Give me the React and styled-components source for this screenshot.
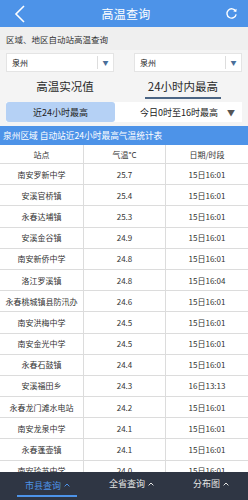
import React from 'react';
import styled, { createGlobalStyle } from 'styled-components';

const GlobalStyle = createGlobalStyle`
  html, body {
    margin: 0;
    padding: 0;
    background: #ffffff;
    font-family: "Noto Sans CJK SC", "Noto Sans", "Liberation Sans", sans-serif;
  }
  * { box-sizing: border-box; }
`;

const Page = styled.div`
  width: 248px;
  height: 500px;
  overflow: hidden;
  position: relative;
  background: #fff;
`;

const Header = styled.div`
  height: 27px;
  background: #4d93e8;
  display: flex;
  align-items: center;
  justify-content: space-between;
  padding: 0 8px 0 12px;
  color: #fff;
`;

const Title = styled.div`
  font-size: 12px;
  letter-spacing: 0.3px;
`;

const IconBox = styled.div`
  width: 16px;
  height: 16px;
  display: flex;
  align-items: center;
  justify-content: center;
`;

const SectionLabel = styled.div`
  height: 23px;
  background: #efefef;
  display: flex;
  align-items: center;
  padding-left: 6px;
  font-size: 8.5px;
  color: #333;
`;

const FilterArea = styled.div`
  background: #f4f4f4;
  padding: 3px 6px 4px;
`;

const SelectRow = styled.div`
  display: flex;
  justify-content: space-between;
`;

const Select = styled.div`
  width: 108px;
  height: 19px;
  background: #fff;
  border: 1px solid #e4e4e4;
  display: flex;
  align-items: center;
  font-size: 8px;
  color: #222;
`;

const SelectText = styled.div`
  flex: 1;
  padding-left: 5px;
`;

const SelectArrow = styled.div`
  width: 16px;
  height: 13px;
  border-left: 1px solid #ddd;
  display: flex;
  align-items: center;
  justify-content: center;
  color: #4a6f9a;
  font-size: 6px;
`;

const Tabs = styled.div`
  display: flex;
  height: 27px;
  margin-top: 1px;
`;

const Tab = styled.div`
  flex: 1;
  display: flex;
  justify-content: center;
  align-items: center;
`;

const TabLabel = styled.div`
  font-size: 11.5px;
  color: #2a2a2a;
  padding: 2px 3px 3px;
  border-bottom: 2px solid ${p => (p.$active ? '#4b6584' : 'transparent')};
  margin-top: 2px;
`;

const SubTabs = styled.div`
  display: flex;
  height: 20px;
  margin-top: 2px;
  background: #fff;
`;

const SubTab = styled.div`
  flex: 1;
  display: flex;
  align-items: center;
  justify-content: center;
  font-size: 9px;
  color: #222;
  background: ${p => (p.$active ? '#b5d1f5' : '#fff')};
  border-radius: 3px;
  gap: 9px;
  padding-left: ${p => (p.$active ? '0' : '18px')};
`;

const Caret = styled.span`
  font-size: 8px;
  color: #555;
`;

const TableTitle = styled.div`
  height: 19px;
  background: #4d93e8;
  color: #fff;
  font-size: 8.7px;
  display: flex;
  align-items: center;
  padding-left: 3px;
`;

const Table = styled.div`
  background: #fff;
`;

const Row = styled.div`
  display: grid;
  grid-template-columns: 83px 82px 83px;
  height: ${p => (p.$head ? '19px' : '21.2px')};
  border-bottom: 1px solid #dcdcdc;
`;

const Cell = styled.div`
  display: flex;
  align-items: center;
  justify-content: center;
  font-size: 8px;
  color: #333;
  border-left: ${p => (p.$first ? 'none' : '1px solid #dcdcdc')};
  white-space: nowrap;
`;

const BottomNav = styled.div`
  position: absolute;
  left: 0;
  right: 0;
  bottom: 0;
  height: 28px;
  background: #2f3644;
  display: flex;
  align-items: center;
  justify-content: space-between;
  padding: 0 12px 0 17px;
`;

const NavItem = styled.div`
  font-size: 9px;
  color: ${p => (p.$active ? '#4d93e8' : '#e6e6e6')};
  padding: 0 7px 3px 8px;
  border-bottom: 2px solid ${p => (p.$active ? '#4d93e8' : 'transparent')};
  margin-top: ${p => (p.$active ? '3px' : '0')};
  display: flex;
  align-items: center;
  gap: 3px;
`;

const Chevron = () => (
  <svg width="6" height="4" viewBox="0 0 6 4">
    <path d="M0.6 3.4 L3 1 L5.4 3.4" fill="none" stroke="currentColor" strokeWidth="1" />
  </svg>
);

const rows = [
  ['南安罗新中学', '25.7', '15日16:01'],
  ['安溪官桥镇', '25.4', '15日16:01'],
  ['永春达埔镇', '25.3', '15日16:01'],
  ['安溪金谷镇', '24.9', '15日16:01'],
  ['南安新侨中学', '24.8', '15日16:01'],
  ['洛江罗溪镇', '24.8', '15日16:04'],
  ['永春桃城镇县防汛办', '24.6', '15日16:01'],
  ['南安洪梅中学', '24.5', '15日16:01'],
  ['南安金光中学', '24.5', '15日16:01'],
  ['永春石鼓镇', '24.4', '15日16:01'],
  ['安溪福田乡', '24.3', '16日13:13'],
  ['永春龙门滩水电站', '24.2', '15日16:01'],
  ['南安龙泉中学', '24.1', '15日16:01'],
  ['永春蓬壶镇', '24.1', '15日16:01'],
  ['南安玲苏中学', '24.0', '15日16:01'],
];

export default function App() {
  return (
    <Page>
      <GlobalStyle />
      <Header>
        <IconBox>
          <svg width="12" height="18" viewBox="0 0 12 18">
            <path d="M10 1 L2 9 L10 17" fill="none" stroke="#fff" strokeWidth="1.6" />
          </svg>
        </IconBox>
        <Title>高温查询</Title>
        <IconBox>
          <svg width="13" height="13" viewBox="0 0 14 14">
            <path d="M11.5 4.5 A5 5 0 1 0 12 8" fill="none" stroke="#fff" strokeWidth="1.5" />
            <path d="M12.5 1.8 L12.2 5.3 L8.8 4.6 Z" fill="#fff" />
          </svg>
        </IconBox>
      </Header>
      <SectionLabel>区域、地区自动站高温查询</SectionLabel>
      <FilterArea>
        <SelectRow>
          <Select>
            <SelectText>泉州</SelectText>
            <SelectArrow>▼</SelectArrow>
          </Select>
          <Select>
            <SelectText>泉州</SelectText>
            <SelectArrow>▼</SelectArrow>
          </Select>
        </SelectRow>
        <Tabs>
          <Tab><TabLabel>高温实况值</TabLabel></Tab>
          <Tab><TabLabel $active>24小时内最高</TabLabel></Tab>
        </Tabs>
        <SubTabs>
          <SubTab $active>近24小时最高</SubTab>
          <SubTab>今日0时至16时最高<Caret>▼</Caret></SubTab>
        </SubTabs>
      </FilterArea>
      <TableTitle>泉州区域 自动站近24小时最高气温统计表</TableTitle>
      <Table>
        <Row $head>
          <Cell $first>站点</Cell>
          <Cell>气温°C</Cell>
          <Cell>日期/时段</Cell>
        </Row>
        {rows.map(r => (
          <Row key={r[0]}>
            <Cell $first>{r[0]}</Cell>
            <Cell>{r[1]}</Cell>
            <Cell>{r[2]}</Cell>
          </Row>
        ))}
      </Table>
      <BottomNav>
        <NavItem $active>市县查询<Chevron /></NavItem>
        <NavItem>全省查询<Chevron /></NavItem>
        <NavItem>分布图<Chevron /></NavItem>
      </BottomNav>
    </Page>
  );
}
